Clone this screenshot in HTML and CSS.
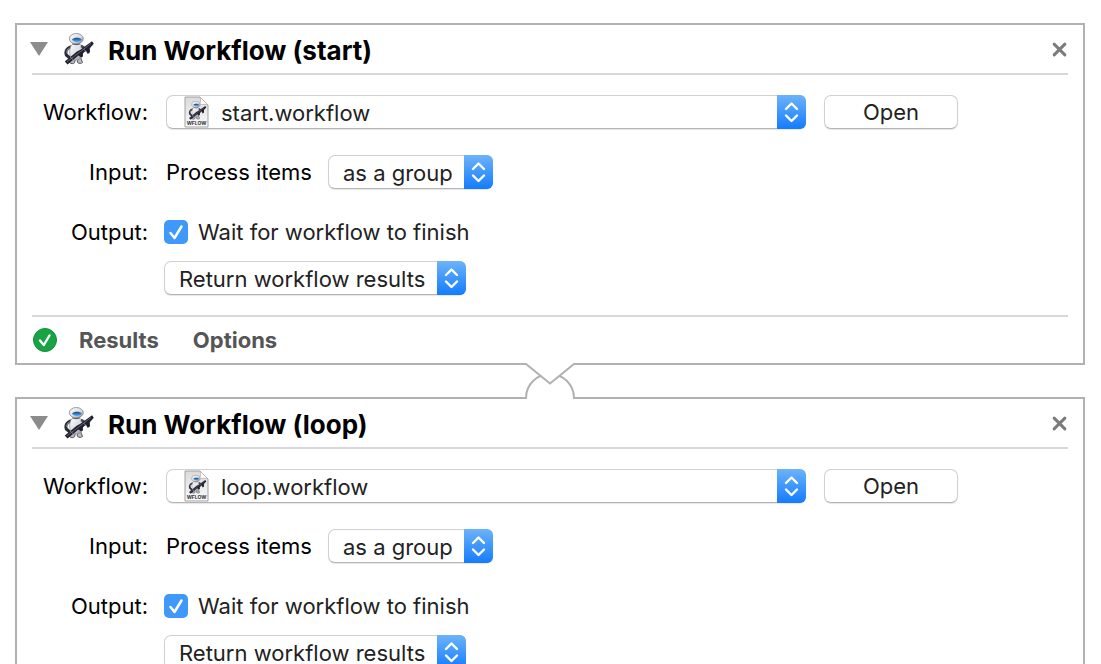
FILE: index.html
```html
<!DOCTYPE html>
<html lang="en">
<head>
<meta charset="utf-8">
<title>Run Workflow</title>
<link rel="stylesheet" href="styles.css">
</head>
<body>
<svg class="sprite" aria-hidden="true">
  <defs>
    <linearGradient id="metal" x1="0" y1="0" x2="1" y2="1">
      <stop offset="0" stop-color="#ffffff"/><stop offset=".55" stop-color="#dcdce2"/><stop offset="1" stop-color="#85858f"/>
    </linearGradient>
    <linearGradient id="visor" x1="0" y1="0" x2="0" y2="1">
      <stop offset="0" stop-color="#173f7c"/><stop offset="1" stop-color="#4db2ff"/>
    </linearGradient>
    <linearGradient id="paper" x1="0" y1="0" x2="0" y2="1">
      <stop offset="0" stop-color="#dadada"/><stop offset="1" stop-color="#fafafa"/>
    </linearGradient>
    <symbol id="robot" viewBox="0 0 30 32">
      <path d="M6.500 14C3 15 1 18.500 2.300 22l3 2.500" fill="none" stroke="#2c2c38" stroke-width="3" stroke-linecap="round"/>
      <path d="M5.500 15C3.500 16 2.600 18 3 20" fill="none" stroke="#a5a5b2" stroke-width="1"/>
      <path d="M8 25l-2.500 4.500c1.500 1.600 4 1.400 5 .3l1-4zM13 25l.5 4.500c1.500 1.400 4 1 5 .1L16.500 24z" fill="#b9b9c3" stroke="#3c3c46" stroke-width=".8"/>
      <path d="M7.500 12c3-1.700 8-1.500 10 .5 1.800 3 1.600 8.500-.3 12.500-2.500 2.500-7.500 2.500-10 0C5 21 5.300 15.500 7.500 12z" fill="url(#metal)" stroke="#8a8a94" stroke-width=".7"/>
      <path d="M17 13c2 .8 3.500 2.200 5.500 3" stroke="#4a4a58" stroke-width="2.500" fill="none"/>
      <path d="M8.500 10.500c2 1.300 5.500 1.300 7.500 0" stroke="#55555f" stroke-width="1.300" fill="none"/>
      <ellipse cx="12.300" cy="5.700" rx="7" ry="5.200" fill="url(#metal)" stroke="#83838d" stroke-width=".8"/>
      <path d="M8 6.500c2-2.400 7.800-2.400 9.600 0-.8 3-8.300 3.500-9.600 0z" fill="url(#visor)"/>
      <path d="M.8 28.500L13 18.500l3-1.500L28 8.300l1.800 2.500-4 4.400.2 4-2.200 1.800-2-3.200-3 2.700.2 3-2.200.8-2.300-1.800L3.500 31.500z" fill="#20202c"/>
      <path d="M3 28.800L16 19l11-8.500" fill="none" stroke="#6b6b7c" stroke-width=".9"/>
      <path d="M6 24l3.500 3M19.500 16l3 3" stroke="#8080a0" stroke-width="1"/>
    </symbol>
    <symbol id="document" viewBox="0 0 25 32">
      <path d="M1 1h15l8 8v22H1z" fill="url(#paper)" stroke="#a2a2a2"/>
      <path d="M16 1c1 3 .5 6-.5 8 3-1 6-.8 8.500 0z" fill="#fff" stroke="#aaa" stroke-width=".7"/>
      <use href="#robot" x="4" y="5" width="19" height="19"/>
      <text x="12.500" y="29" class="doc-type" text-anchor="middle">WFLOW</text>
    </symbol>
    <linearGradient id="blue" x1="0" y1="0" x2="0" y2="1">
      <stop offset="0" stop-color="#6cb3fa"/><stop offset="1" stop-color="#147cfe"/>
    </linearGradient>
    <symbol id="stepper" viewBox="0 0 29 34">
      <path d="M0 0h23a6 6 0 0 1 6 6v22a6 6 0 0 1-6 6H0z" fill="url(#blue)"/>
      <path d="M9 14l5.500-5.500L20 14M9 20.500l5.500 5.500 5.500-5.500" fill="none" stroke="#fff" stroke-width="2.400" stroke-linecap="round" stroke-linejoin="round"/>
    </symbol>
    <symbol id="triangle" viewBox="0 0 18 14"><path d="M0 0h18L9 14z" fill="#8c8c8c"/></symbol>
    <symbol id="close" viewBox="0 0 14 14"><path d="M2 2l10 10M12 2L2 12" fill="none" stroke="#7b7b7b" stroke-width="2.800" stroke-linecap="round"/></symbol>
    <symbol id="success" viewBox="0 0 24 24">
      <circle cx="12" cy="12" r="11.500" fill="#18a345" stroke="#158b3c"/>
      <path d="M7 12.500l3.800 4.500L16.500 7.500" fill="none" stroke="#fff" stroke-width="2.400" stroke-linecap="round" stroke-linejoin="round"/>
    </symbol>
  </defs>
</svg>
<main class="workflow">
  <section class="action">
    <header class="action-header">
      <button class="icon-button" aria-label="Collapse"><svg class="triangle"><use href="#triangle"/></svg></button>
      <svg class="robot" aria-hidden="true"><use href="#robot"/></svg>
      <h2 class="title">Run Workflow (start)</h2>
      <button class="icon-button close" aria-label="Remove"><svg class="cross"><use href="#close"/></svg></button>
    </header>
    <div class="action-body">
      <div class="row">
        <label class="label" for="file-start">Workflow:</label>
        <div class="field">
          <span class="popup popup-file">
            <select id="file-start"><option>start.workflow</option></select>
            <svg class="document" aria-hidden="true"><use href="#document"/></svg>
            <svg class="stepper" aria-hidden="true"><use href="#stepper"/></svg>
          </span>
          <button class="open">Open</button>
        </div>
      </div>
      <div class="row">
        <span class="label">Input:</span>
        <div class="field">
          <label for="input-start">Process items</label>
          <span class="popup popup-input">
            <select id="input-start"><option>as a group</option></select>
            <svg class="stepper" aria-hidden="true"><use href="#stepper"/></svg>
          </span>
        </div>
      </div>
      <div class="row">
        <span class="label">Output:</span>
        <div class="field field-output">
          <label class="check"><span class="box"><input type="checkbox" checked><svg class="tick" viewBox="0 0 24 24" aria-hidden="true"><path d="M6.500 13l4 5L17.500 6.500"/></svg></span>Wait for workflow to finish</label>
          <span class="popup popup-output">
            <select aria-label="Output"><option>Return workflow results</option></select>
            <svg class="stepper" aria-hidden="true"><use href="#stepper"/></svg>
          </span>
        </div>
      </div>
    </div>
    <footer class="action-footer">
      <svg class="success" role="img" aria-label="Succeeded"><use href="#success"/></svg>
      <button class="tab">Results</button>
      <button class="tab">Options</button>
    </footer>
  </section>

  <div class="link" aria-hidden="true">
    <svg class="connector" viewBox="0 0 52 36">
      <path d="M2 36v-1a24 24 0 0 1 48 0v1" fill="#fff" stroke="#b1b1b1" stroke-width="2"/>
      <path d="M1 0h50v1L26 20.500 1 1z" fill="#fff"/>
      <path d="M1 1h1l24 19.500L50 1h1" fill="none" stroke="#b1b1b1" stroke-width="2"/>
    </svg>
  </div>

  <section class="action">
    <header class="action-header">
      <button class="icon-button" aria-label="Collapse"><svg class="triangle"><use href="#triangle"/></svg></button>
      <svg class="robot" aria-hidden="true"><use href="#robot"/></svg>
      <h2 class="title">Run Workflow (loop)</h2>
      <button class="icon-button close" aria-label="Remove"><svg class="cross"><use href="#close"/></svg></button>
    </header>
    <div class="action-body">
      <div class="row">
        <label class="label" for="file-loop">Workflow:</label>
        <div class="field">
          <span class="popup popup-file">
            <select id="file-loop"><option>loop.workflow</option></select>
            <svg class="document" aria-hidden="true"><use href="#document"/></svg>
            <svg class="stepper" aria-hidden="true"><use href="#stepper"/></svg>
          </span>
          <button class="open">Open</button>
        </div>
      </div>
      <div class="row">
        <span class="label">Input:</span>
        <div class="field">
          <label for="input-loop">Process items</label>
          <span class="popup popup-input">
            <select id="input-loop"><option>as a group</option></select>
            <svg class="stepper" aria-hidden="true"><use href="#stepper"/></svg>
          </span>
        </div>
      </div>
      <div class="row">
        <span class="label">Output:</span>
        <div class="field field-output">
          <label class="check"><span class="box"><input type="checkbox" checked><svg class="tick" viewBox="0 0 24 24" aria-hidden="true"><path d="M6.500 13l4 5L17.500 6.500"/></svg></span>Wait for workflow to finish</label>
          <span class="popup popup-output">
            <select aria-label="Output"><option>Return workflow results</option></select>
            <svg class="stepper" aria-hidden="true"><use href="#stepper"/></svg>
          </span>
        </div>
      </div>
    </div>
  </section>
</main>
</body>
</html>
```
FILE: styles.css
```css
* { box-sizing: border-box; }

html { scrollbar-width: none; }

body {
  margin: 0;
  background: #fff;
  color: #000;
  font: 22px/34px Inter, "Liberation Sans", sans-serif;
}

svg { display: block; }
.sprite { position: absolute; width: 0; height: 0; }

button, select { font: inherit; color: #222; }
button { padding: 0; border: 0; background: none; }

.workflow { padding: 23px 16px 0 15px; }

.action {
  padding: 0 15px;
  border: 2px solid #b1b1b1;
  background: #fff;
}

.action-header {
  display: flex;
  align-items: center;
  height: 50px;
  border-bottom: 2px solid #d8d8d8;
}

.icon-button { display: flex; justify-content: center; width: 14px; }
.triangle { flex: none; width: 18px; height: 14px; }
.robot { width: 30px; height: 32px; margin-left: 18px; }
.title { margin: 0 0 0 14px; padding-top: 4px; font-size: 26px; line-height: 32px; font-weight: 700; }
.close { width: 18px; margin-left: auto; }
.cross { width: 15px; height: 15px; }

.action-body {
  display: flex;
  flex-direction: column;
  gap: 26px;
  padding: 20px 0;
}

.row { display: flex; align-items: flex-start; gap: 16px; }
.label { flex: none; width: 116px; text-align: right; }
.field { display: flex; flex: 1; align-items: center; gap: 16px; padding-left: 2px; }
.field-output { flex-direction: column; align-items: flex-start; gap: 12px; padding-left: 0; }

.popup { position: relative; display: block; height: 34px; }
.popup-file { flex: 0 1 640px; }
.popup-input { width: 165px; }
.popup-output { width: 302px; }

.popup select {
  display: block;
  width: 100%;
  height: 34px;
  padding: 0 30px 2px 14px;
  border: 1px solid #d0d0d0;
  border-bottom-color: #b4b4b4;
  border-radius: 7px;
  background: #fff;
  box-shadow: 0 1px 1px #0000001a;
  appearance: none;
}

.popup-file select { padding-left: 54px; }
.stepper { position: absolute; top: 0; right: 0; width: 29px; height: 34px; pointer-events: none; }
.document { position: absolute; top: 1px; left: 18px; width: 25px; height: 32px; pointer-events: none; }
.doc-type { font: 700 5px Inter, sans-serif; fill: #333; }

.open {
  width: 134px;
  height: 34px;
  margin-left: 2px;
  border: 1px solid #d0d0d0;
  border-bottom-color: #b4b4b4;
  border-radius: 7px;
  background: #fff;
  box-shadow: 0 1px 1px #0000001a;
  line-height: 32px;
}

.check { display: flex; align-items: center; gap: 10px; color: #222; }
.box { position: relative; width: 24px; height: 24px; }
.box input {
  display: block;
  width: 24px;
  height: 24px;
  margin: 0;
  border-radius: 5px;
  appearance: none;
}
.box input:checked { background: #3f99fa; }
.tick {
  position: absolute;
  inset: 0;
  fill: none;
  stroke: #fff;
  stroke-width: 2.5;
  stroke-linecap: round;
  stroke-linejoin: round;
  pointer-events: none;
}

.action-footer {
  display: flex;
  align-items: center;
  height: 48px;
  border-top: 2px solid #d8d8d8;
}
.success { width: 24px; height: 24px; margin-left: 1px; }
.tab { margin-left: 22px; color: #555; font-weight: 700; }
.tab + .tab { margin-left: 34px; }

.link { position: relative; height: 32px; }
.connector { position: absolute; top: -2px; left: calc(50% - 26px); width: 52px; height: 36px; }
```
